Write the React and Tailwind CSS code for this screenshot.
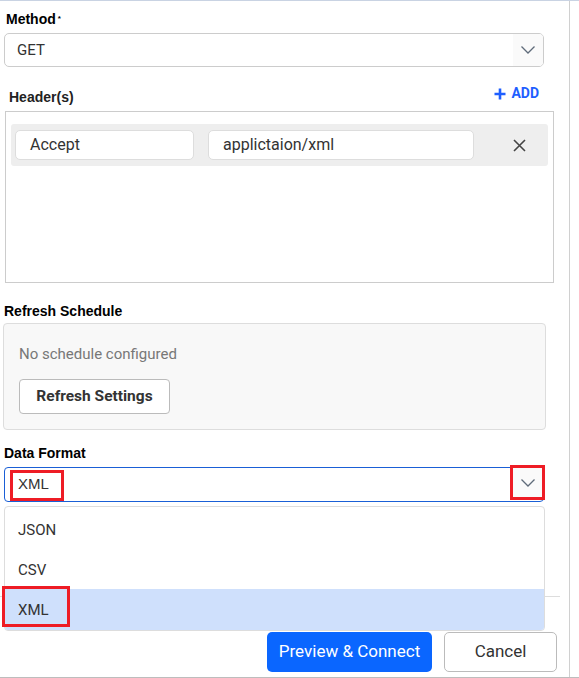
import React from "react";

const Chevron = ({ className }) => (
  <svg width="16" height="10" viewBox="0 0 16 10" className={className}>
    <path d="M1.5 1.5 L8 8 L14.5 1.5" fill="none" stroke="#5f6b7a" strokeWidth="1.3" />
  </svg>
);

export default function App() {
  return (
    <div className="w-[579px] h-[678px] bg-white font-['Roboto',sans-serif] text-[#333] overflow-hidden border-t border-b border-t-[#c9d3e3] border-b-[#bdbdbd]">
      <div className="w-[570px] h-full border-r border-r-[#d0d0d0] flex flex-col">
        {/* Method */}
        <div className="pl-[6px] pt-[10px] h-[32px] font-['Liberation_Sans',sans-serif] font-bold text-[14px] text-black leading-[16px]">
          Method<span className="text-[8px] align-top ml-[2px]">*</span>
        </div>
        <div className="ml-[4px] w-[540px] h-[34px] border border-[#cccccc] rounded-[5px] flex items-center overflow-hidden">
          <span className="pl-[12px] text-[15px] text-[#333] flex-1">GET</span>
          <span className="w-[30px] h-full bg-[#fafafa] flex items-center justify-center">
            <Chevron />
          </span>
        </div>

        {/* Headers */}
        <div className="mt-[21px] h-[23px] flex items-start justify-between pr-[30px]">
          <span className="pl-[9px] -mt-[1px] font-['Liberation_Sans',sans-serif] font-bold text-[14px] text-[#222]">Header(s)</span>
          <span className="flex items-center gap-[5px] -mt-[5px] font-bold text-[14px] text-[#1f5fff]">
            <svg width="12" height="12" viewBox="0 0 12 12">
              <path d="M6 0.5 V11.5 M0.5 6 H11.5" stroke="#1f5fff" strokeWidth="2.6" />
            </svg>
            ADD
          </span>
        </div>
        <div className="ml-[5px] w-[549px] h-[172px] border border-[#cccccc] px-[5px] pt-[12px]">
          <div className="h-[42px] w-[537px] bg-[#eeeeee] rounded-[3px] flex items-center pl-[4px]">
            <div className="w-[179px] h-[30px] bg-white border border-[#dddddd] rounded-[5px] flex items-center pl-[14px] text-[16px] text-[#333]">
              Accept
            </div>
            <div className="ml-[14px] w-[266px] h-[30px] bg-white border border-[#dddddd] rounded-[5px] flex items-center pl-[14px] text-[16px] text-[#333]">
              applictaion/xml
            </div>
            <svg width="13" height="13" viewBox="0 0 13 13" className="ml-[39px]">
              <path d="M1 1 L12 12 M12 1 L1 12" stroke="#444" strokeWidth="1.6" />
            </svg>
          </div>
        </div>

        {/* Refresh Schedule */}
        <div className="mt-[18px] h-[22px] pl-[4px] font-['Liberation_Sans',sans-serif] font-bold text-[14px] text-black">
          Refresh Schedule
        </div>
        <div className="ml-[3px] w-[543px] h-[107px] bg-[#f8f8f8] border border-[#dddddd] rounded-[4px] pl-[15px] pt-[21px]">
          <div className="text-[15px] text-[#777] leading-[18px]">No schedule configured</div>
          <button className="mt-[16px] w-[151px] h-[35px] bg-white border border-[#bbbbbb] rounded-[4px] font-bold text-[15.5px] text-[#333]">
            Refresh Settings
          </button>
        </div>

        {/* Data Format */}
        <div className="mt-[13px] h-[24px] pl-[4px] font-['Liberation_Sans',sans-serif] font-bold text-[14px] text-black">
          Data Format
        </div>
        <div className="relative ml-[4px] w-[540px] h-[35px]">
          <div className="h-full border border-[#1a5fd6] rounded-[4px] flex items-center">
            <span className="pl-[13px] text-[15px] text-[#333] font-['Liberation_Sans',sans-serif]">XML</span>
          </div>
          <div className="absolute left-[6px] top-[3px] w-[54px] h-[31px] border-[3px] border-[#ee1c25]" />
          <div className="absolute left-[506px] -top-[2px] w-[35px] h-[35px] border-[3px] border-[#ee1c25] bg-[#fafafa] flex items-center justify-center">
            <Chevron />
          </div>

          {/* dropdown */}
          <div className="absolute left-0 top-[39px] w-[541px] h-[125px] bg-white border border-[#dddddd] rounded-[4px] z-10 pt-[3px] overflow-hidden">
            <div className="h-[41px] flex items-center pl-[13px] text-[15px] text-[#333]">JSON</div>
            <div className="h-[38px] flex items-center pl-[13px] text-[15px] text-[#333]">CSV</div>
            <div className="h-[42px] bg-[#cfe0fc] flex items-center pl-[13px] text-[15px] text-[#333]">XML</div>
          </div>
          <div className="absolute -left-[2px] top-[119px] w-[68px] h-[41px] border-[3px] border-[#ee1c25] z-20" />
        </div>

        {/* footer */}
        <div className="mt-[94px] mr-[9px] border-t border-[#dddddd] flex justify-end gap-[12px] pt-[35px] pr-[3px]">
          <button className="w-[165px] h-[40px] bg-[#0a66ff] rounded-[5px] text-white text-[17px]">Preview &amp; Connect</button>
          <button className="w-[113px] h-[40px] bg-white border border-[#bbbbbb] rounded-[5px] text-[#333] text-[17px]">Cancel</button>
        </div>
      </div>
    </div>
  );
}
